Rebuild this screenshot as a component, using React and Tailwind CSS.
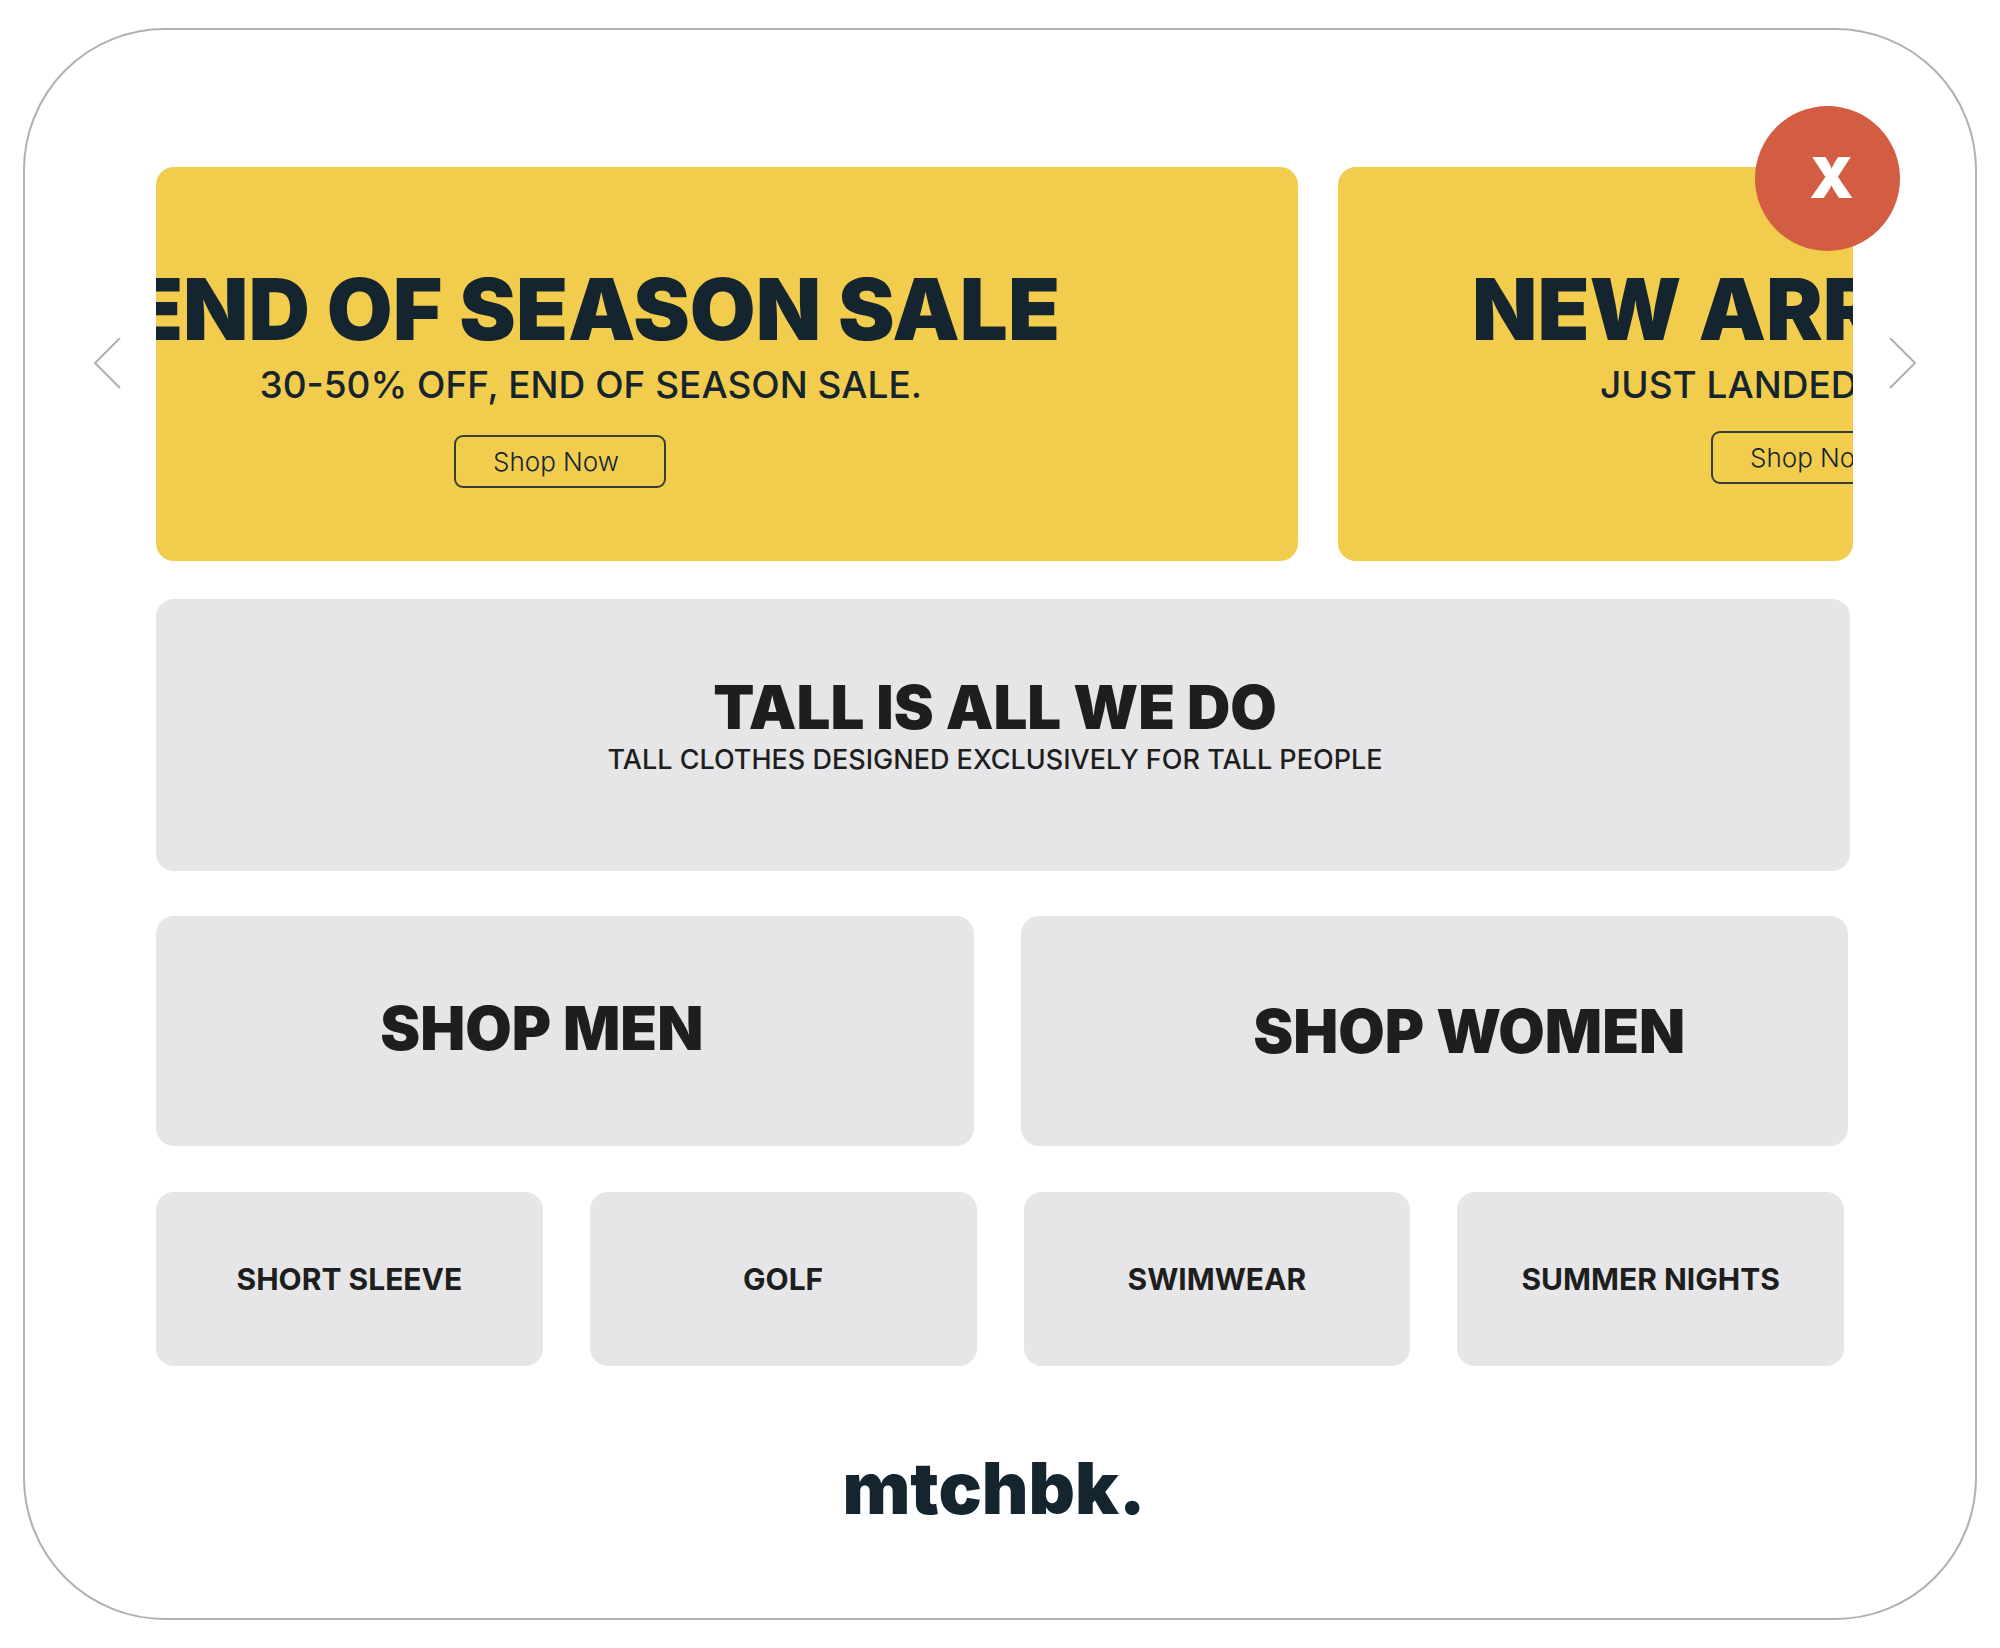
import clsx from 'clsx'

const categories = ['SHORT SLEEVE', 'GOLF', 'SWIMWEAR', 'SUMMER NIGHTS']

function Chevron({ direction }) {
  return (
    <svg viewBox="0 0 28 52" className="h-[52px] w-7" fill="none" stroke="#b0b0b0" strokeWidth="2">
      <path d={direction === 'left' ? 'M27 0 2 25l25 25' : 'M1 0l25 25L1 50'} />
    </svg>
  )
}

function ShopNow({ className }) {
  return (
    <button
      type="button"
      className={clsx(
        'h-[53px] w-[212px] shrink-0 rounded-[9px] border-2 border-[#142530]/85 pr-2 text-[26px] leading-8 font-light',
        className
      )}
    >
      Shop Now
    </button>
  )
}

function Tile({ className, children }) {
  return (
    <a
      href="#"
      className={clsx('flex items-center justify-center rounded-[18px] bg-[#e6e6e8] whitespace-nowrap', className)}
    >
      {children}
    </a>
  )
}

function Carousel() {
  return (
    <section className="flex" aria-label="Promotions">
      <button type="button" aria-label="Previous" className="flex w-[131px] items-center justify-end pr-[35px]">
        <Chevron direction="left" />
      </button>
      <div className="relative min-w-0 flex-1">
        <div className="grid h-[394px] grid-cols-[1142fr_515fr] gap-10 whitespace-nowrap text-[#142530]">
          <article className="flex flex-col items-end overflow-hidden rounded-[18px] bg-[#f2cc4c] pt-[95px]">
            <h2 className="mr-[238px] text-[85px] leading-24 font-black">END OF SEASON SALE</h2>
            <p className="mt-[3px] mr-[376px] text-[37px] leading-12 font-medium">30-50% OFF, END OF SEASON SALE.</p>
            <ShopNow className="mt-[26px] mr-[632px]" />
          </article>
          <article className="flex flex-col items-start overflow-hidden rounded-[18px] bg-[#f2cc4c] pt-[95px]">
            <h2 className="ml-[134px] text-[85px] leading-24 font-black">NEW ARRIVALS</h2>
            <p className="mt-[3px] ml-[262px] text-[37px] leading-12 font-medium">JUST LANDED</p>
            <ShopNow className="mt-[22px] ml-[373px]" />
          </article>
        </div>
        <button
          type="button"
          aria-label="Close"
          className="absolute -top-[61px] -right-[47px] size-[145px] rounded-full bg-[#d25d42] pb-0.5 pl-2 text-[56px] leading-none font-black text-white"
        >
          X
        </button>
      </div>
      <button type="button" aria-label="Next" className="flex w-[122px] items-center pl-9">
        <Chevron direction="right" />
      </button>
    </section>
  )
}

export default function App() {
  return (
    <div className="min-h-screen bg-white px-[23px] py-7 font-['Inter',sans-serif] text-[#1e1e1e]">
      <main className="rounded-[142px] border-2 border-[#b0b0b0] pt-[137px] pb-[82px]">
        <Carousel />

        <div className="mr-[122px] ml-[131px]">
          <section className="mt-[38px] mr-[3px] flex h-[272px] flex-col items-center rounded-[18px] bg-[#e6e6e8] pt-[76px] pr-4">
            <h1 className="text-[60px] leading-16 font-black">TALL IS ALL WE DO</h1>
            <p className="mt-[3px] text-[27px] leading-9 font-medium">TALL CLOTHES DESIGNED EXCLUSIVELY FOR TALL PEOPLE</p>
          </section>

          <section className="mt-[45px] mr-[5px] grid h-[230px] grid-cols-[818fr_828fr] gap-[47px] text-[60px] leading-16 font-black">
            <Tile className="pr-[46px] pb-1.5">SHOP MEN</Tile>
            <Tile className="pl-[70px]">SHOP WOMEN</Tile>
          </section>

          <nav className="mt-[46px] mr-[9px] grid h-[174px] grid-cols-4 gap-[47px] text-[30px] leading-9 font-bold">
            {categories.map((name) => (
              <Tile key={name}>{name}</Tile>
            ))}
          </nav>
        </div>

        <footer className="mt-[74px] pr-3 text-center text-[72px] leading-24 font-black text-[#142530]">mtchbk.</footer>
      </main>
    </div>
  )
}
